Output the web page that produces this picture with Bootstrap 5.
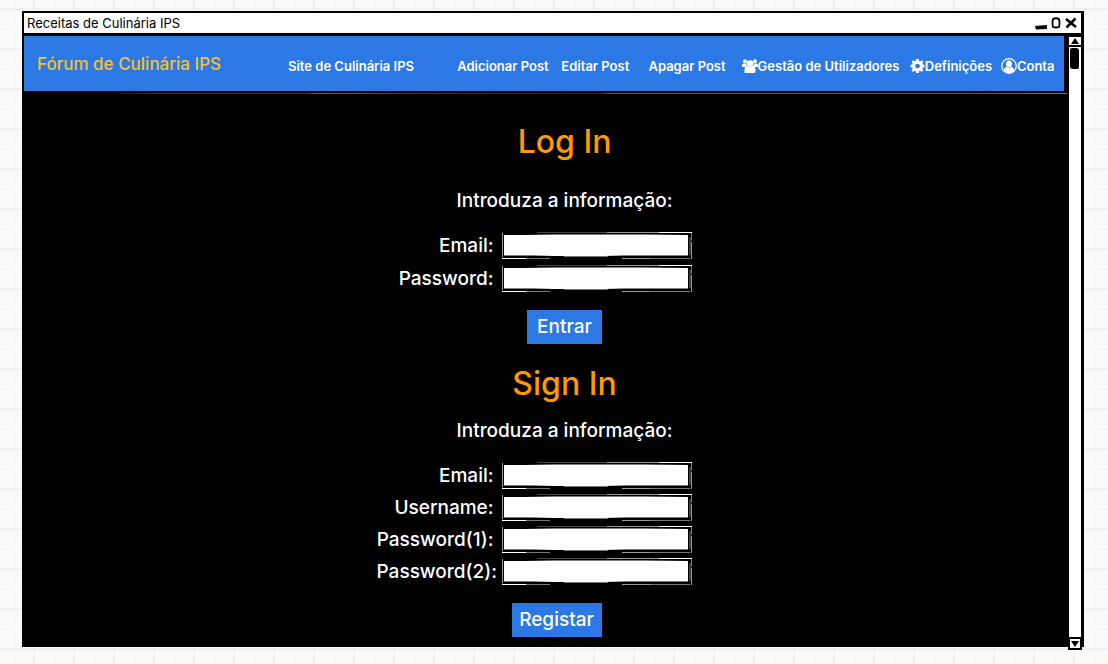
<!DOCTYPE html>
<html lang="pt">
<head>
<meta charset="utf-8">
<meta name="viewport" content="width=device-width, initial-scale=1">
<title>Receitas de Culinária IPS</title>
<link href="https://cdn.jsdelivr.net/npm/bootstrap@5.3.0/dist/css/bootstrap.min.css" rel="stylesheet">
<style>
body{
  font-family:Inter,"Liberation Sans",sans-serif;
  background-color:#fafafa;
  background-image:
    linear-gradient(90deg,#f1f1f1 2px,transparent 2px),linear-gradient(#f1f1f1 2px,transparent 2px),
    linear-gradient(90deg,#f3f3f3 1px,transparent 1px),linear-gradient(#f3f3f3 1px,transparent 1px);
  background-size:40px 40px;
  background-position:33px 0,0 8px,14px 0,0 29px;
  padding:11px 24px 18px 22px;
}
.app-window{background:#000;border:2px solid #000;border-right-width:3px;border-bottom-width:1px;min-height:calc(100vh - 30px)}
.title-bar{background:#fff;height:20px;font-size:13px;line-height:20px;color:#000;padding:0 4px 0 3px}
.title-bar button{background:none;border:0;padding:0;line-height:0}
.main-nav{background:#2c78e4;height:55px;margin:3px 5px 0 0;padding:0 0 0 13px}
.brand{color:#f1c232;font-size:17px;font-weight:500;line-height:24px;width:251px;white-space:nowrap;text-decoration:none}
.nav-grid{display:grid;grid-template-columns:169fr 104fr 87fr 93fr 168fr 91fr 63fr;min-width:0}
.nav-grid a{color:#fff;font-size:13px;font-weight:600;line-height:20px;white-space:nowrap;text-decoration:none;min-width:0}
.nav-grid svg{flex:none}
.rule{height:1px;margin:2px 2px 0 0;background:linear-gradient(90deg,#000 8%,#333 12%,#333 27%,#666 28%,#333 40%,#222 55%,#555 56%,#555 90%,#777)}
.page{padding:28px 0 9px 36px}
.page h1{color:#ff9900;font-size:32px;font-weight:500;line-height:40px;margin:0}
.page p,.page label{color:#fff;font-size:19px;line-height:24px;font-weight:500}
.page p{margin:15px 0 19px}
.login p{margin-top:27px}
.fields{display:grid;grid-template-columns:117px 190px 53px;column-gap:8px;row-gap:6px;align-items:center}
.fields.tight{row-gap:5px}
.fields label{white-space:nowrap;text-align:right;grid-column:1}
.fields input{grid-column:2;height:27px;border:0;border-radius:0;padding:3px 8px;font-size:16px;color:#000;outline:0;
  background:url("data:image/svg+xml,%3Csvg xmlns='http://www.w3.org/2000/svg' viewBox='0 0 190 27' preserveAspectRatio='none'%3E%3Cpath fill='%23000' d='M0 0h190v27H0z'/%3E%3Cpath fill='%23fff' d='M2 3h20l30 -.5h90l44 .5v20.500l-64 0l-20 .5h-50l-20 -.5H2z'/%3E%3Cg fill='none'%3E%3Cpath stroke='%23444' d='M35 .5h70'/%3E%3Cpath stroke='%23999' d='M105 .5h52M.5 1v24M189.5 10v17M120 26.5h28'/%3E%3Cpath stroke='%23fff' d='M157 .5h33v8M0 26.5h24'/%3E%3Cpath stroke='%23777' d='M24 26.5h24M148 26.5h40M62 24.5h44M188 5v18'/%3E%3C/g%3E%3C/svg%3E") center/100% 100% no-repeat}
.action{background:#2c78e4;color:#fff;border:0;border-radius:0;font-size:19px;font-weight:500;line-height:34px;height:34px;padding:0;width:75px;margin-top:18px}
.action.wider{width:90px}
.scroll-track{background:#fff;width:12px;flex:none;margin-top:3px;margin-bottom:-3px}
.scroll-track button{display:block;width:12px;height:11px;padding:0;border:solid #000;border-width:1px 0 2px;background:#fff;line-height:0}
.scroll-track .down{outline:2px solid #000;outline-offset:-1px;border:0}
.thumb{width:9px;height:21px;margin:1px 0 0 1px;background:#000;border-radius:2px 3px 2px 3px}
</style>
</head>
<body>
<div class="app-window d-flex flex-column">
  <header class="title-bar d-flex justify-content-between align-items-center">
    <span>Receitas de Culinária IPS</span>
    <div class="d-flex align-items-center gap-1">
      <button type="button" aria-label="Minimizar"><svg width="12" height="14" viewBox="0 0 12 14"><path d="M0 10l12-1v4l-11 .5z"/></svg></button>
      <button type="button" aria-label="Maximizar"><svg width="10" height="12" viewBox="0 0 10 12"><path d="M2 2Q5 .5 8 2q1 4 0 8Q5 11 2 10q-1-4 0-8z" fill="none" stroke="#000" stroke-width="1.800"/></svg></button>
      <button type="button" aria-label="Fechar"><svg width="12" height="12" viewBox="0 0 12 12"><path d="M1 2l10 8M10.500 1.500L1.500 10.500" stroke="#000" stroke-width="2.600"/></svg></button>
    </div>
  </header>
  <div class="d-flex flex-grow-1">
    <div class="flex-grow-1 overflow-hidden">
      <nav class="main-nav d-flex align-items-center">
        <a class="brand flex-shrink-0" href="#">Fórum de Culinária IPS</a>
        <div class="nav-grid flex-grow-1 pt-1">
          <a href="#">Site de Culinária IPS</a>
          <a href="#">Adicionar Post</a>
          <a href="#">Editar Post</a>
          <a href="#">Apagar Post</a>
          <a class="d-flex align-items-center" href="#"><svg width="16" height="14" viewBox="0 0 16 14" fill="#fff"><circle cx="3" cy="2.300" r="2"/><circle cx="13" cy="2.300" r="2"/><path d="M0 8V6q0-1.500 2-1.500h2L5 8zM16 8V6q0-1.500-2-1.500h-2L11 8z"/><circle cx="8" cy="4.500" r="3.300"/><path d="M2.500 14v-3q0-4 3-4 2.500 1.500 5 0 3 0 3 4v1.500q0 1.500-2 1.500z"/></svg>Gestão de Utilizadores</a>
          <a class="d-flex align-items-center" href="#"><svg width="15" height="14" viewBox="0 0 16 16" fill="#fff"><path fill-rule="evenodd" d="M6.500 0h3l.4 2.200 1.300.5L13 1.400 14.800 3.200l-1.300 1.700.5 1.400L16 6.600v2.800l-2 .4-.5 1.300 1.200 1.800-1.900 1.900-1.700-1.300-1.300.5L9.500 16h-3l-.3-2-1.400-.5L3 14.800 1.200 13l1.300-1.800L2 9.800 0 9.400V6.600l2-.3.500-1.400L1.200 3.100 3 1.300l1.800 1.300L6.200 2zM8 5.300a2.700 2.700 0 100 5.400 2.700 2.700 0 000-5.400z"/></svg>Definições</a>
          <a class="d-flex align-items-center" href="#"><svg width="16" height="16" viewBox="0 0 16 16"><circle cx="8" cy="8" r="7.300" fill="none" stroke="#fff" stroke-width="1.300"/><ellipse cx="8" cy="6" rx="3" ry="3.500" fill="#fff"/><path d="M2.500 12.800Q3 9.500 5.500 9q2.500 1.500 5 0 2.500.5 3 3.800A7 7 0 018 15.300a7 7 0 01-5.500-2.500z" fill="#fff"/></svg>Conta</a>
        </div>
      </nav>
      <div class="rule"></div>
      <main class="page">
        <form class="login d-flex flex-column align-items-center">
          <h1>Log In</h1>
          <p>Introduza a informação:</p>
          <div class="fields">
            <label for="loginEmail">Email:</label><input id="loginEmail" type="email">
            <label for="loginPass">Password:</label><input id="loginPass" type="password">
          </div>
          <button class="action" type="submit">Entrar</button>
        </form>
        <form class="d-flex flex-column align-items-center pt-3 mt-1">
          <h1>Sign In</h1>
          <p>Introduza a informação:</p>
          <div class="fields tight">
            <label for="email">Email:</label><input id="email" type="email">
            <label for="user">Username:</label><input id="user" type="text">
            <label for="pass1">Password(1):</label><input id="pass1" type="password">
            <label for="pass2">Password(2):</label><input id="pass2" type="password">
          </div>
          <button class="action wider me-3" type="submit">Registar</button>
        </form>
      </main>
    </div>
    <div class="scroll-track d-flex flex-column justify-content-between">
      <div>
        <button type="button" aria-label="Subir"><svg width="12" height="8" viewBox="0 0 12 8"><path d="M6 1l4 6H2z"/></svg></button>
        <div class="thumb"></div>
      </div>
      <button class="down" type="button" aria-label="Descer"><svg width="12" height="9" viewBox="0 0 12 9"><path d="M2 2h8L6 8z"/></svg></button>
    </div>
  </div>
</div>
<script src="https://cdn.jsdelivr.net/npm/bootstrap@5.3.0/dist/js/bootstrap.bundle.min.js"></script>
</body>
</html>
